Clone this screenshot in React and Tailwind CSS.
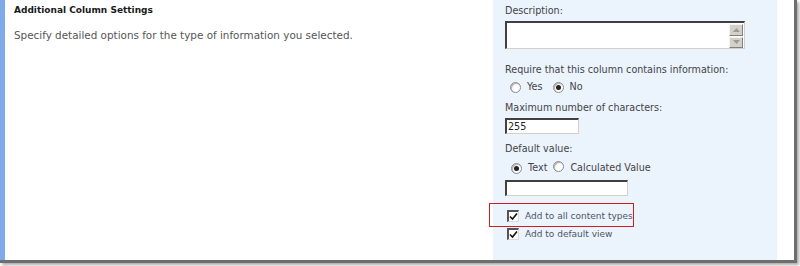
import React from 'react';

function Radio({ checked }) {
  return (
    <span className="relative inline-flex h-[11px] w-[11px] items-center justify-center rounded-full border border-[#8a8a8a] bg-white shadow-[inset_1px_1px_1px_#b0b0b0]">
      {checked && <span className="h-[5px] w-[5px] rounded-full bg-[#222]" />}
    </span>
  );
}

function Checkbox() {
  return (
    <span className="inline-flex h-[12px] w-[12px] shrink-0 items-center justify-center border-t-2 border-l-2 border-b border-r border-t-[#555] border-l-[#555] border-b-[#dcdcdc] border-r-[#dcdcdc] bg-white">
      <svg width="9" height="9" viewBox="0 0 9 9">
        <path d="M1 4.5 L3.5 7 L8 1.5" fill="none" stroke="#111" strokeWidth="1.6" />
      </svg>
    </span>
  );
}

function Sunken({ className, children }) {
  return (
    <div className={`border-t-2 border-l-2 border-b border-r border-t-[#404040] border-l-[#404040] border-b-[#d4d0c8] border-r-[#d4d0c8] bg-white ${className}`}>
      {children}
    </div>
  );
}

function ScrollBtn({ up }) {
  return (
    <div className="flex h-[12px] w-[14px] items-center justify-center border border-t-[#f4f4f4] border-l-[#f4f4f4] border-b-[#808080] border-r-[#808080] bg-[#d4d0c8]">
      <svg width="7" height="4" viewBox="0 0 7 4">
        <path d={up ? 'M0 4 L3.5 0 L7 4 Z' : 'M0 0 L3.5 4 L7 0 Z'} fill="#9a9a9a" />
      </svg>
    </div>
  );
}

export default function App() {
  return (
    <div className="h-[266px] w-[800px] overflow-hidden bg-white" style={{ fontFamily: '"DejaVu Sans", Verdana, sans-serif' }}>
      <div className="flex h-[263px] w-[797px] border-b-[3px] border-r-[3px] border-[#6e6e6e] shadow-[2px_2px_3px_rgba(0,0,0,0.35)]">
        <div className="w-[5px] shrink-0 bg-[#7eaaea]" />

        <div className="w-[488px] shrink-0 pl-[9px] pt-[2px]">
          <h3 className="mt-[2px] text-[9px] font-bold leading-[12px] text-[#1a1a1a]">Additional Column Settings</h3>
          <p className="mt-[13px] whitespace-nowrap text-[10.4px] leading-[12px] text-[#555]">
            Specify detailed options for the type of information you selected.
          </p>
        </div>

        <div className="w-[284px] shrink-0 bg-[#ebf3fd] pl-[12px] pt-[5px] text-[9.6px] leading-[12px] text-[#444]">
          <div>Description:</div>
          <div className="mt-[4px] flex w-[240px]">
            <Sunken className="flex h-[28px] flex-1 justify-end pr-[1px] pt-[1px]">
              <div className="flex flex-col gap-[1px]">
                <ScrollBtn up />
                <ScrollBtn />
              </div>
            </Sunken>
          </div>

          <div className="mt-[15px]">Require that this column contains information:</div>
          <div className="mt-[5px] flex items-center pl-[5px]">
            <Radio />
            <span className="ml-[6px]">Yes</span>
            <span className="ml-[10px]"><Radio checked /></span>
            <span className="ml-[6px]">No</span>
          </div>

          <div className="mt-[9px]">Maximum number of characters:</div>
          <Sunken className="mt-[4px] flex h-[16px] w-[74px] items-center pl-[1px] text-[#222]">255</Sunken>

          <div className="mt-[9px]">Default value:</div>
          <div className="mt-[6px] flex items-center pl-[6px]">
            <Radio checked />
            <span className="ml-[6px]">Text</span>
            <span className="ml-[6px]"><Radio /></span>
            <span className="ml-[6px]">Calculated Value</span>
          </div>
          <Sunken className="mt-[5px] h-[16px] w-[123px]" />

          <div className="relative mt-[7px] flex h-[24px] items-center pl-[2px] pt-[1px] text-[9px] text-[#4e5566]">
            <div className="absolute -left-[16px] top-0 h-[24px] w-[145px] border border-[#cc1f1f]" />
            <Checkbox />
            <span className="ml-[6px]">Add to all content types</span>
          </div>
          <div className="mt-[1px] flex items-center pl-[2px] text-[9px] text-[#4e5566]">
            <Checkbox />
            <span className="ml-[6px]">Add to default view</span>
          </div>
        </div>

        <div className="flex-1" />
      </div>
    </div>
  );
}
